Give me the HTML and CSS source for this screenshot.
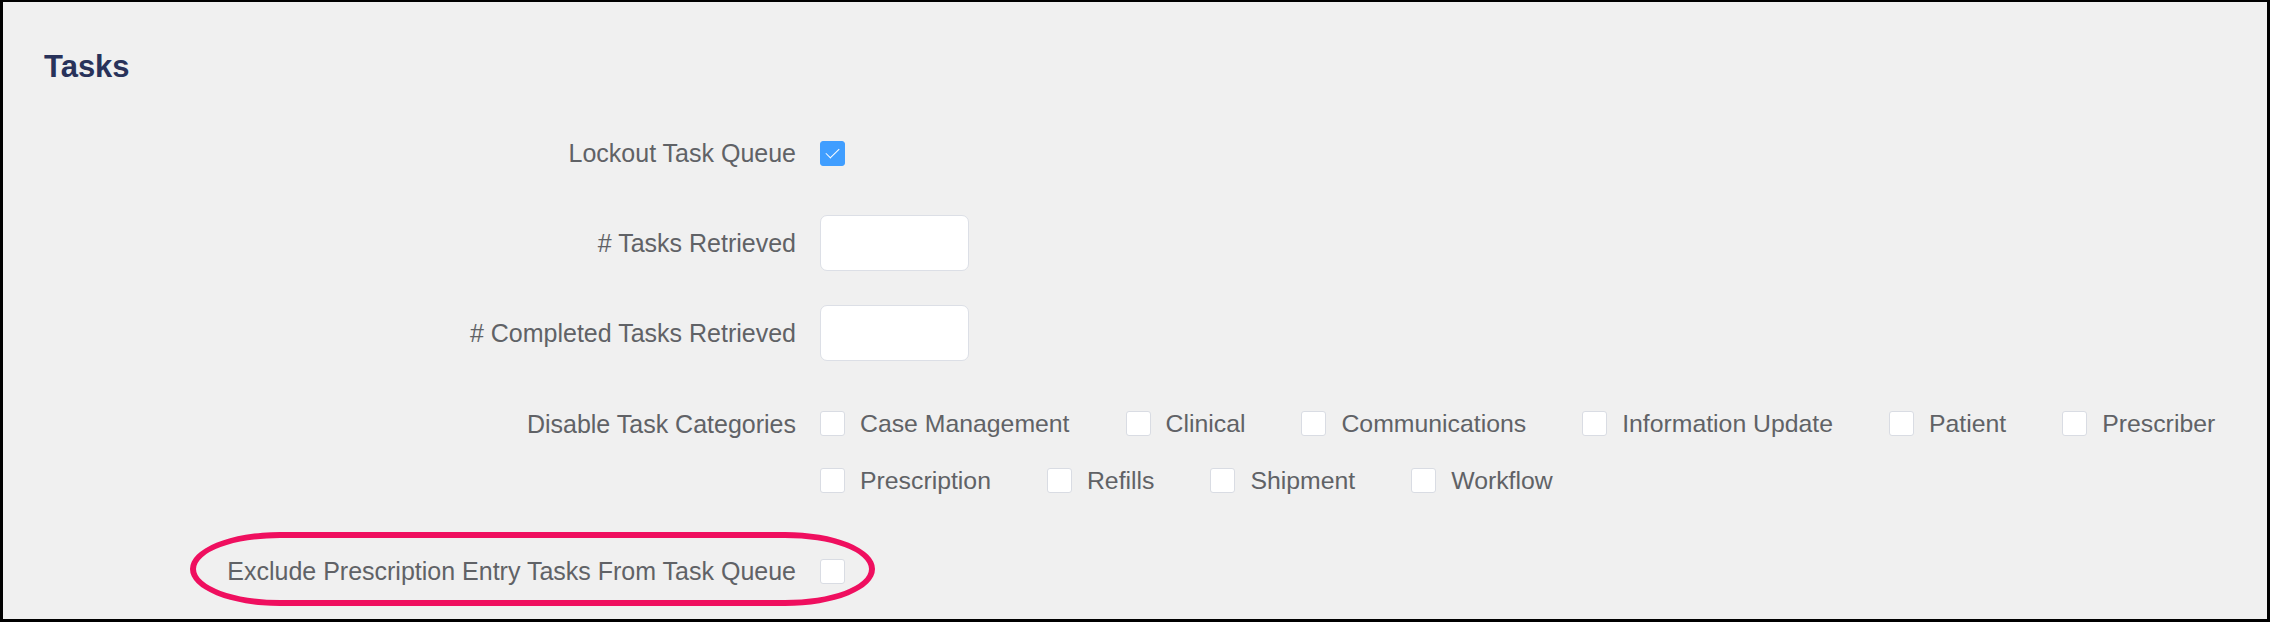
FILE: index.html
```html
<!DOCTYPE html>
<html>
<head>
<meta charset="utf-8">
<link rel="stylesheet" href="styles.css">
</head>
<body>
<div class="panel">
  <h2 class="title">Tasks</h2>
  <div class="form">
    <div class="label">Lockout Task Queue</div>
    <div class="control">
      <span class="cb checked"></span>
    </div>

    <div class="label"># Tasks Retrieved</div>
    <div class="control">
      <span class="input"></span>
    </div>

    <div class="label"># Completed Tasks Retrieved</div>
    <div class="control">
      <span class="input"></span>
    </div>

    <div class="label label-tall">Disable Task Categories</div>
    <div class="options">
      <label class="opt"><span class="cb"></span><span class="opt-text">Case Management</span></label>
      <label class="opt"><span class="cb"></span><span class="opt-text">Clinical</span></label>
      <label class="opt"><span class="cb"></span><span class="opt-text">Communications</span></label>
      <label class="opt"><span class="cb"></span><span class="opt-text">Information Update</span></label>
      <label class="opt"><span class="cb"></span><span class="opt-text">Patient</span></label>
      <label class="opt"><span class="cb"></span><span class="opt-text">Prescriber</span></label>
      <label class="opt"><span class="cb"></span><span class="opt-text">Prescription</span></label>
      <label class="opt"><span class="cb"></span><span class="opt-text">Refills</span></label>
      <label class="opt"><span class="cb"></span><span class="opt-text">Shipment</span></label>
      <label class="opt"><span class="cb"></span><span class="opt-text">Workflow</span></label>
    </div>

    <div class="label">Exclude Prescription Entry Tasks From Task Queue</div>
    <div class="control">
      <span class="cb"></span>
    </div>
  </div>
  <div class="highlight"></div>
</div>
</body>
</html>
```

FILE: styles.css
```css
* { box-sizing: border-box; }

html, body {
  margin: 0;
  padding: 0;
  background: #f0f0f0;
}

.panel {
  position: relative;
  width: 2270px;
  height: 622px;
  background: #f0f0f0;
  border: 3px solid #000;
  border-top-width: 2px;
  padding: 46px 20px 0 41px;
  font-family: "Liberation Sans", Helvetica, Arial, sans-serif;
  color: #606266;
  overflow: hidden;
}

.title {
  margin: 0;
  font-size: 31px;
  line-height: 37px;
  font-weight: 700;
  color: #28325a;
}

.form {
  margin-top: 40px;
  display: grid;
  grid-template-columns: 752px 1fr;
  column-gap: 24px;
  row-gap: 34px;
  align-items: start;
}

.label {
  height: 56px;
  display: flex;
  align-items: center;
  justify-content: flex-end;
  font-size: 25px;
  line-height: 28px;
  white-space: nowrap;
}

.label-tall {
  height: 57px;
}

.control {
  height: 56px;
  display: flex;
  align-items: center;
}

.cb {
  position: relative;
  display: inline-block;
  flex: none;
  width: 25px;
  height: 25px;
  background: #fff;
  border: 1px solid #d9dce3;
  border-radius: 3px;
}

.cb.checked {
  background: #409eff;
  border-color: #409eff;
}

.cb.checked::after {
  content: "";
  position: absolute;
  left: 8px;
  top: 3px;
  width: 6px;
  height: 12px;
  border-right: 1.8px solid #fff;
  border-bottom: 1.8px solid #fff;
  transform: rotate(45deg);
}

.input {
  display: inline-block;
  width: 149px;
  height: 56px;
  background: #fff;
  border: 1px solid #dcdfe6;
  border-radius: 7px;
}

.options {
  display: flex;
  flex-wrap: wrap;
  column-gap: 56px;
}

.opt {
  height: 57px;
  display: flex;
  align-items: center;
  gap: 15px;
  font-size: 24.8px;
  line-height: 28px;
  white-space: nowrap;
}

.highlight {
  position: absolute;
  left: 187px;
  top: 530px;
  width: 685px;
  height: 74px;
  border: 6px solid #ef0f5f;
  border-radius: 90px / 37px;
  pointer-events: none;
}
```
